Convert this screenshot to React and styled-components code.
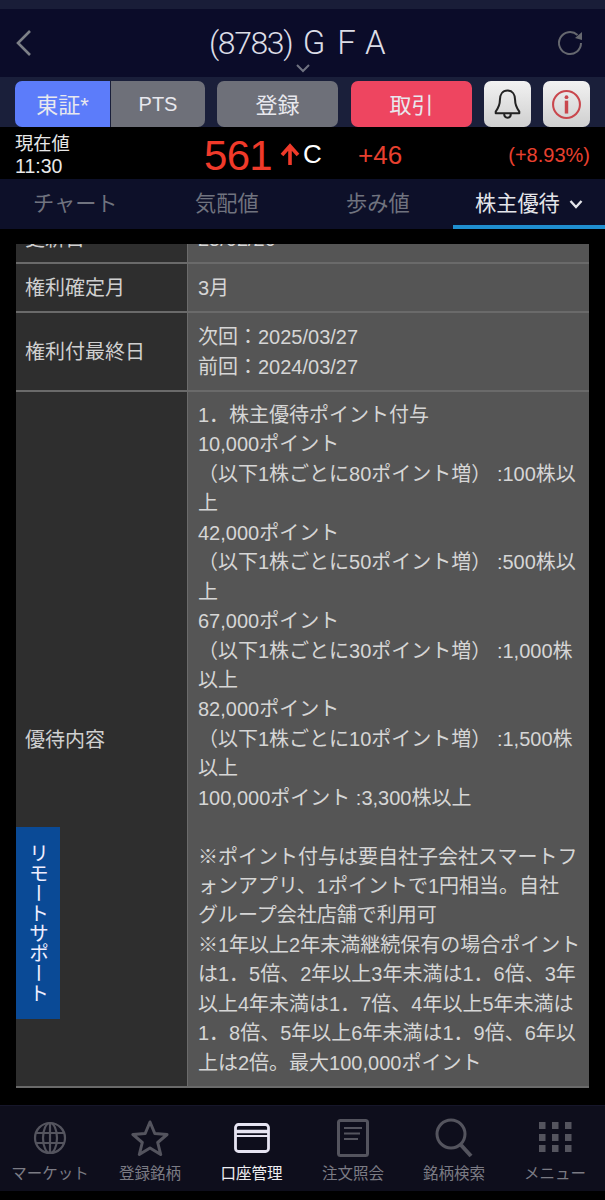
import React from "react";
import styled, { createGlobalStyle } from "styled-components";

const Global = createGlobalStyle`
  html, body { margin: 0; padding: 0; background: #000; }
  * { box-sizing: border-box; }
`;
const FONT = `"Liberation Sans", "Noto Sans CJK JP", sans-serif`;

const Page = styled.div`
  position: relative; width: 605px; height: 1200px; background: #000; overflow: hidden;
  display: flex; flex-direction: column; font-family: ${FONT};
`;
const StatusStrip = styled.div`height: 9px; background: #191d38;`;
const Header = styled.header`
  height: 68px; background: #0b0c29; display: flex; align-items: center; justify-content: space-between;
  padding: 0 20px 0 15px; position: relative;
`;
const Title = styled.h1`
  margin: 0; position: absolute; left: 209px; top: 16px; white-space: nowrap;
  font-family: Roboto, "Liberation Sans", sans-serif;
  font-size: 32px; line-height: 36px; font-weight: 300; color: #dcdde6; letter-spacing: -1.400px;
  & span { letter-spacing: 12px; margin-left: 4px; font-size: 33px; }
`;
const Chevron = styled.svg`position: absolute; left: 295px; top: 54px;`;
const Toolbar = styled.div`
  height: 50px; background: #1a1f3a; display: flex; align-items: flex-start; padding: 4px 15px 0 15px;
`;
const Segment = styled.div`display: flex; width: 190px; height: 46px; gap: 1px; margin-right: 12px;`;
const Btn = styled.div`
  height: 46px; width: ${p => p.$w}px; flex: none; margin-right: ${p => p.$mr || 0}px;
  border-radius: ${p => p.$r || "7px"}; background: ${p => p.$bg};
  color: ${p => p.$c || "#e8e8ee"}; font-size: ${p => p.$fs || 22}px;
  padding-bottom: ${p => p.$cjk ? 3 : 0}px;
  display: flex; align-items: center; justify-content: center;
`;
const Quote = styled.section`
  height: 49px; margin-top: 3px; background: #000; display: flex; align-items: center; position: relative; padding-left: 15px;
`;
const QuoteLabel = styled.div`
  width: 184px; color: #e8e8e8; font-size: 18.300px; line-height: 23px;
`;
const QuoteTime = styled.span`font-size: 19.500px;`;
const Price = styled.div`
  width: 76px; margin-left: 5px; margin-top: 1px; color: #f03a2a; font-size: 42px; line-height: 49px; letter-spacing: -.7px;
`;
const Cflag = styled.span`color: #fff; font-size: 26px; margin-left: 3px;`;
const Change = styled.span`
  color: #e8402f; font-size: ${p => p.$fs}px; position: absolute; ${p => p.$left != null ? `left:${p.$left}px;` : `right:${p.$right}px;`}
  top: 12px; line-height: 26px;
`;
const Tabs = styled.nav`
  height: 50px; background: #0d1029; position: relative;
`;
const Tab = styled.div`
  position: absolute; left: ${p => p.$x}px; top: 10px; font-size: 21.200px; line-height: 30px;
  color: ${p => p.$on ? "#e4e5ea" : "#70737f"}; display: flex; align-items: center; gap: 9px;
`;
const TabLine = styled.div`
  position: absolute; left: 453px; right: 0; bottom: 0; height: 4px; background: #1f8fd0;
`;
const Scroller = styled.main`
  flex: 1; margin-top: 15px; padding: 0 16px; min-height: 0;
`;
const Row = styled.div`
  display: grid; grid-template-columns: 171px 1fr; column-gap: 1px; height: ${p => p.$h}px;
  background: #6b6b6b; border-bottom: 2px solid #6a6a6a; overflow: hidden;
`;
const Head = styled.div`
  background: #2e2e2e; color: #d0d0d0; font-size: 20px; display: flex; align-items: center; padding: 0 0 2px 9px;
`;
const Cell = styled.div`
  background: #555; color: #d6d6d6; font-size: 20px; line-height: 29.430px; padding-left: 10px;
  display: flex; flex-direction: column; justify-content: ${p => p.$top ? "flex-start" : "center"};
  padding-top: ${p => p.$top ? "9px" : "2px"}; white-space: nowrap; overflow: hidden;
`;
const ClipHead = styled.div`
  background: #2e2e2e; color: #d0d0d0; font-size: 20px; padding-left: 9px; line-height: 30px; margin-top: -20px; height: 40px;
`;
const ClipCell = styled.div`
  background: #555; color: #d6d6d6; font-size: 20px; padding-left: 10px; line-height: 30px; margin-top: -20px; height: 40px;
`;
const Remote = styled.div`
  position: absolute; left: 16px; top: 827px; width: 44px; height: 192px; background: #0a4a96; color: #eef;
  writing-mode: vertical-rl; font-size: 20px; display: flex; align-items: center; justify-content: center;
`;
const BottomNav = styled.nav`
  position: absolute; left: 0; right: 0; top: 1105px; height: 86px; background: #0e0e1c; border-top: 1px solid #16162a;
  display: grid; grid-template-columns: 100px 100px 103px 100px 102px 100px;
`;
const NavItem = styled.div`
  display: flex; flex-direction: column; align-items: center; height: 100%;
`;
const IconBox = styled.div`height: 47px; margin-top: 8px; display: flex; align-items: center; justify-content: center;`;
const NavLabel = styled.span`font-size: 15.500px; line-height: 20px; margin-top: 3px; white-space: nowrap; color: ${p => p.$on ? "#eeeef2" : "#7b7b84"};`;

const BackIcon = () => <svg width="18" height="28" viewBox="0 0 18 28"><path d="M15 2 3 14l12 12" fill="none" stroke="#7d8087" strokeWidth="2.600" /></svg>;
const Reload = () => <svg width="30" height="30" viewBox="0 0 30 30"><path d="M22.500 7A11 11 0 1 0 26 15" fill="none" stroke="#66686f" strokeWidth="2" /><path d="M27 4v8l-7-2z" fill="#66686f" /></svg>;
const Bell = () => <svg width="27" height="32" viewBox="0 0 32 38"><path d="M16 3c-6 0-9 5-9 11 0 7-2 10-5 14v2h28v-2c-3-4-5-7-5-14 0-6-3-11-9-11z M12 30c0 7 8 7 8 0" fill="none" stroke="#222" strokeWidth="2.400" strokeLinejoin="round" /></svg>;
const Info = () => <svg width="31" height="31" viewBox="0 0 36 36"><circle cx="18" cy="18" r="15.600" fill="none" stroke="#c9474d" strokeWidth="2.400" /><circle cx="18" cy="9.500" r="2.200" fill="#c9474d" /><rect x="16" y="13.500" width="4" height="15" fill="#c9474d" /></svg>;
const UpArrow = () => <svg width="20" height="24" viewBox="0 0 20 24"><path d="M10 3v19M2 12l8-9 8 9" fill="none" stroke="#f03a2a" strokeWidth="3.600" /></svg>;
const Globe = () => <svg width="36" height="36" viewBox="0 0 36 36" fill="none" stroke="#54545e" strokeWidth="2.200"><circle cx="18" cy="18" r="15" /><ellipse cx="18" cy="18" rx="7" ry="15" /><path d="M18 3v30M3.500 13h29M3.500 23h29" /></svg>;
const Star = () => <svg width="38" height="38" viewBox="0 0 38 38"><path d="m19 3 4.800 11.500 12.300 1-9.400 8 3 12L19 29l-10.700 6.500 3-12-9.400-8 12.300-1z" fill="none" stroke="#54545e" strokeWidth="3" strokeLinejoin="round" /></svg>;
const Card = () => <svg width="36" height="30" viewBox="0 0 36 30" fill="none" stroke="#e6e4f2" strokeWidth="2.800"><rect x="1.500" y="1.500" width="33" height="27" rx="3" /><path d="M2 8.500h32" strokeWidth="3.500" /><path d="M2 13h32" strokeWidth="2" /></svg>;
const Doc = () => <svg width="32" height="38" viewBox="0 0 32 38" fill="none" stroke="#54545e"><rect x="1.500" y="1.500" width="29" height="35" rx="2" strokeWidth="3" /><path d="M7 9h18M7 14.500h16M7 20h14" strokeWidth="2" /></svg>;
const Search = () => <svg width="38" height="40" viewBox="0 0 38 40" fill="none" stroke="#54545e"><circle cx="16" cy="16" r="14" strokeWidth="3" /><path d="m26 27 10 11" strokeWidth="4" /></svg>;
const Dots = () => <svg width="33" height="34" viewBox="0 0 33 34" fill="#54545e">{[1, 13, 24].flatMap(y => [0, 13, 26].map(x => <rect key={`${x}-${y}`} x={x} y={y} width="6.500" height="7" />))}</svg>;

const lines = ["1．株主優待ポイント付与", "10,000ポイント", "（以下1株ごとに80ポイント増） :100株以", "上", "42,000ポイント", "（以下1株ごとに50ポイント増） :500株以", "上", "67,000ポイント", "（以下1株ごとに30ポイント増） :1,000株", "以上", "82,000ポイント", "（以下1株ごとに10ポイント増） :1,500株", "以上", "100,000ポイント :3,300株以上", "\u00a0", "※ポイント付与は要自社子会社スマートフ", "ォンアプリ、1ポイントで1円相当。自社", "グループ会社店舗で利用可", "※1年以上2年未満継続保有の場合ポイント", "は1．5倍、2年以上3年未満は1．6倍、3年", "以上4年未満は1．7倍、4年以上5年未満は", "1．8倍、5年以上6年未満は1．9倍、6年以", "上は2倍。最大100,000ポイント"];
const nav = [["マーケット", <Globe />], ["登録銘柄", <Star />], ["口座管理", <Card />, true], ["注文照会", <Doc />], ["銘柄検索", <Search />], ["メニュー", <Dots />]];

export default function App() {
  return (
    <Page>
      <Global />
      <StatusStrip />
      <Header>
        <BackIcon />
        <Title>(8783) <span>GFA</span></Title>
        <Chevron width="16" height="10" viewBox="0 0 16 10"><path d="M2 2l6 6 6-6" fill="none" stroke="#6f7280" strokeWidth="2" /></Chevron>
        <Reload />
      </Header>
      <Toolbar>
        <Segment>
          <Btn $w={95} $r="7px 0 0 7px" $bg="#5c7cfa" $cjk>東証*</Btn>
          <Btn $w={94} $r="0 7px 7px 0" $bg="#6e7079" $fs={20}>PTS</Btn>
        </Segment>
        <Btn $w={121} $mr={13} $bg="#6e7079" $cjk>登録</Btn>
        <Btn $w={121} $mr={12} $bg="#ee4560" $cjk>取引</Btn>
        <Btn $w={47} $mr={12} $bg="linear-gradient(#f2f2f2,#cfcfcf)"><Bell /></Btn>
        <Btn $w={47} $bg="linear-gradient(#f2f2f2,#cfcfcf)"><Info /></Btn>
      </Toolbar>
      <Quote>
        <QuoteLabel>現在値<br /><QuoteTime>11:30</QuoteTime></QuoteLabel>
        <Price>561</Price>
        <UpArrow />
        <Cflag>C</Cflag>
        <Change $left={358} $fs={26}>+46</Change>
        <Change $right={15} $fs={20}>(+8.93%)</Change>
      </Quote>
      <Tabs>
        <Tab $x={33}>チャート</Tab>
        <Tab $x={195}>気配値</Tab>
        <Tab $x={346}>歩み値</Tab>
        <Tab $x={475} $on>株主優待
          <svg width="14" height="10" viewBox="0 0 14 10"><path d="M1.500 2 7 8l5.500-6" fill="none" stroke="#e4e5ea" strokeWidth="2.400" /></svg>
        </Tab>
        <TabLine />
      </Tabs>
      <Scroller>
        <Row $h={20}><ClipHead>更新日</ClipHead><ClipCell>25/02/20</ClipCell></Row>
        <Row $h={49}><Head>権利確定月</Head><Cell>3月</Cell></Row>
        <Row $h={79}><Head>権利付最終日</Head><Cell><div>次回：2025/03/27</div><div>前回：2024/03/27</div></Cell></Row>
        <Row $h={696}>
          <Head>優待内容</Head>
          <Cell $top>{lines.map((l, i) => <div key={i}>{l}</div>)}</Cell>
        </Row>
      </Scroller>
      <Remote>リモートサポート</Remote>
      <BottomNav>
        {nav.map(([label, icon, on]) => (
          <NavItem key={label}>
            <IconBox>{icon}</IconBox>
            <NavLabel $on={on}>{label}</NavLabel>
          </NavItem>
        ))}
      </BottomNav>
    </Page>
  );
}
